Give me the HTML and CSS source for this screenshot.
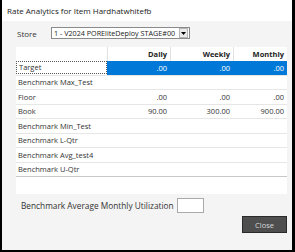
FILE: index.html
```html
<!DOCTYPE html>
<html lang="en">
<head>
    <meta charset="UTF-8">
    <title>Rate Analytics</title>
    <link rel="stylesheet" href="styles.css">
</head>
<body>
    <div class="dialog">
        <div class="title-bar">Rate Analytics for Item Hardhatwhitefb</div>

        <div class="dialog-body">
            <div class="store-row">
                <span class="store-label">Store</span>
                <div class="select-box">
                    <span class="select-text">1 - V2024 POREliteDeploy STAGE#00</span>
                    <span class="select-btn">
                        <svg width="5" height="3" viewBox="0 0 5 3"><polygon points="0,0 5,0 2.5,3" fill="#000"/></svg>
                    </span>
                </div>
            </div>

            <!-- Rates grid -->
            <div class="grid">
                <div class="grid-row grid-head">
                    <div class="cell name"></div>
                    <div class="cell num">Daily</div>
                    <div class="cell num">Weekly</div>
                    <div class="cell num last">Monthly</div>
                </div>
                <div class="grid-row selected">
                    <div class="cell name"><span class="focus">Target</span></div>
                    <div class="cell num">.00</div>
                    <div class="cell num">.00</div>
                    <div class="cell num last">.00</div>
                </div>
                <div class="grid-row">
                    <div class="cell name">Benchmark Max_Test</div>
                    <div class="cell num"></div>
                    <div class="cell num"></div>
                    <div class="cell num last"></div>
                </div>
                <div class="grid-row">
                    <div class="cell name">Floor</div>
                    <div class="cell num">.00</div>
                    <div class="cell num">.00</div>
                    <div class="cell num last">.00</div>
                </div>
                <div class="grid-row">
                    <div class="cell name">Book</div>
                    <div class="cell num">90.00</div>
                    <div class="cell num">300.00</div>
                    <div class="cell num last">900.00</div>
                </div>
                <div class="grid-row">
                    <div class="cell name">Benchmark Min_Test</div>
                    <div class="cell num"></div>
                    <div class="cell num"></div>
                    <div class="cell num last"></div>
                </div>
                <div class="grid-row">
                    <div class="cell name">Benchmark L-Qtr</div>
                    <div class="cell num"></div>
                    <div class="cell num"></div>
                    <div class="cell num last"></div>
                </div>
                <div class="grid-row">
                    <div class="cell name">Benchmark Avg_test4</div>
                    <div class="cell num"></div>
                    <div class="cell num"></div>
                    <div class="cell num last"></div>
                </div>
                <div class="grid-row end">
                    <div class="cell name">Benchmark U-Qtr</div>
                    <div class="cell num"></div>
                    <div class="cell num"></div>
                    <div class="cell num last"></div>
                </div>
            </div>

            <div class="util-row">
                <span>Benchmark Average Monthly Utilization</span>
                <div class="util-input"></div>
            </div>

            <div class="button-row">
                <button class="close-btn">Close</button>
            </div>
        </div>
    </div>
</body>
</html>
```

FILE: styles.css
```css
:root {
    --blue: #0078d7;
    --panel: #f4f4f4;
    --line: #e6e6e6;
    --text: #333;
}

body {
    margin: 0;
    font-family: "Open Sans", "Noto Sans", sans-serif;
    color: var(--text);
}

.dialog {
    width: 295px;
    height: 252px;
    box-sizing: border-box;
    border-style: solid;
    border-color: #000;
    border-width: 0 3px 2px 2px;
    background: var(--panel);
    display: flex;
    flex-direction: column;
}

.title-bar {
    height: 21px;
    background: #fff;
    font-size: 8px;
    line-height: 21px;
    padding-left: 5px;
    color: #222;
}

.dialog-body {
    flex: 1;
    padding: 0 3px 0 14px;
}

.store-row {
    display: flex;
    align-items: center;
    height: 12px;
    margin-top: 6px;
}

.store-label {
    width: 34px;
    padding-left: 1px;
    font-size: 8px;
}

.select-box {
    display: flex;
    align-items: center;
    width: 139px;
    height: 12px;
    box-sizing: border-box;
    border: 1px solid #8a8a8a;
    background: #fff;
}

.select-text {
    flex: 1;
    padding-left: 2px;
    font-size: 7.2px;
    white-space: nowrap;
    overflow: hidden;
    color: #222;
}

.select-btn {
    width: 7px;
    height: 8px;
    margin-right: 1px;
    border: 1px solid #b5b5b5;
    background: #eaeaea;
    display: flex;
    align-items: center;
    justify-content: center;
}

.grid {
    margin-top: 8px;
    width: 271px;
    height: 147px;
    background: #fff;
    font-size: 7.5px;
}

.grid-row {
    display: flex;
    height: 14.5px;
    box-sizing: border-box;
    border-bottom: 1px solid var(--line);
    align-items: center;
}

.grid-head {
    height: 14px;
    border-bottom: none;
    font-weight: bold;
    color: #222;
}

.grid-row.end {
    border-bottom-color: #c8c8c8;
}

.cell {
    height: 100%;
    box-sizing: border-box;
    display: flex;
    align-items: center;
    white-space: nowrap;
}

.cell.name {
    width: 91px;
    padding-left: 2px;
}

.cell.num {
    width: 63px;
    justify-content: flex-end;
    padding-right: 3px;
}

.cell.num.last {
    width: 54px;
}

.grid-head .cell.num {
    border-left: 1px solid #e2e2e2;
}

.selected .cell.num {
    background: var(--blue);
    color: #fff;
}

.focus {
    display: block;
    width: 100%;
    margin-left: -2px;
    padding-left: 2px;
    line-height: 11px;
    border: 1px dotted #555;
}

.util-row {
    display: flex;
    align-items: center;
    margin-top: 4px;
    padding-left: 5px;
    font-size: 8.3px;
    gap: 3px;
}

.util-input {
    width: 27px;
    height: 15px;
    box-sizing: border-box;
    border: 1px solid #aaa;
    background: #fff;
}

.button-row {
    display: flex;
    justify-content: flex-end;
    margin-top: 3px;
}

.close-btn {
    width: 45px;
    height: 17px;
    margin-right: 2px;
    border: 1px solid #2a2a2a;
    background: #4e4e4e;
    color: #d8d8d8;
    font-family: "Open Sans", "Noto Sans", sans-serif;
    font-size: 7.5px;
    padding: 0;
}
```
